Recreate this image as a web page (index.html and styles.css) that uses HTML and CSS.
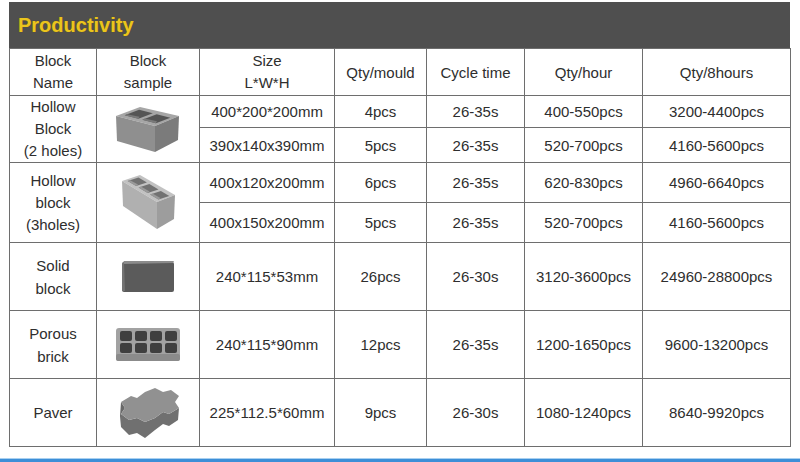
FILE: index.html
```html
<!DOCTYPE html>
<html>
<head>
<meta charset="utf-8">
<title>Productivity</title>
<link rel="stylesheet" href="styles.css">
</head>
<body>
<div class="page">
  <div class="sheet">
    <div class="title-bar"><h1 class="title">Productivity</h1></div>
    <table class="spec">
      <colgroup>
        <col class="w-name"><col class="w-sample"><col class="w-size"><col class="w-mould">
        <col class="w-cycle"><col class="w-hour"><col class="w-8h">
      </colgroup>
      <thead>
        <tr class="r-head">
          <th class="tight">Block<br>Name</th>
          <th class="tight">Block<br>sample</th>
          <th class="tight">Size<br>L*W*H</th>
          <th>Qty/mould</th>
          <th>Cycle time</th>
          <th>Qty/hour</th>
          <th>Qty/8hours</th>
        </tr>
      </thead>
      <tbody>
        <tr class="r1">
          <td rowspan="2" class="tight">Hollow<br>Block<br>(2 holes)</td>
          <td rowspan="2" class="sample">
            <svg class="pic" width="64" height="50" viewBox="0 0 64 50">
              <polygon points="0,12 24,3 63,12 39,22" fill="#a6a6a6"/>
              <polygon points="0,12 39,22 39,48 1,37" fill="#8f8f8f"/>
              <polygon points="39,22 63,12 62,36 39,48" fill="#7b7b7b"/>
              <polygon points="8.7,11.2 22.4,14.7 36.8,9.3 23.1,5.8" fill="#555"/>
              <polygon points="26.3,15.7 39.9,19.2 54.3,13.8 40.7,10.3" fill="#555"/>
              <polygon points="8.7,11.2 22.4,14.7 23.5,12.8 11,10.2" fill="#7a7a7a"/>
              <polygon points="26.3,15.7 39.9,19.2 41,17.3 28.5,14.6" fill="#7a7a7a"/>
            </svg>
          </td>
          <td>400*200*200mm</td><td>4pcs</td><td>26-35s</td><td>400-550pcs</td><td>3200-4400pcs</td>
        </tr>
        <tr class="r2">
          <td>390x140x390mm</td><td>5pcs</td><td>26-35s</td><td>520-700pcs</td><td>4160-5600pcs</td>
        </tr>
        <tr class="r3">
          <td rowspan="2" class="tight">Hollow<br>block<br>(3holes)</td>
          <td rowspan="2" class="sample">
            <svg class="pic" width="57" height="55" viewBox="0 0 57 55">
              <polygon points="2,6 20,0 55,20 37,27" fill="#c2c2c2"/>
              <polygon points="2,6 37,27 37,54 3,31" fill="#b0b0b0"/>
              <polygon points="37,27 55,20 54,44 37,54" fill="#9d9d9d"/>
              <polygon points="7.7,6.1 16.1,11.1 26.9,7.5 18.5,2.5" fill="#727272"/>
              <polygon points="18.6,12.6 27.7,18 38.5,14.4 29.4,9" fill="#727272"/>
              <polygon points="30.1,19.5 38.5,24.5 49.3,20.9 40.9,15.9" fill="#727272"/>
              <polygon points="7.7,6.1 16.1,11.1 18,9.6 10,5.2" fill="#9a9a9a"/>
              <polygon points="18.6,12.6 27.7,18 29.6,16.5 21,11.6" fill="#9a9a9a"/>
              <polygon points="30.1,19.5 38.5,24.5 40.4,23 32.4,18.5" fill="#9a9a9a"/>
            </svg>
          </td>
          <td>400x120x200mm</td><td>6pcs</td><td>26-35s</td><td>620-830pcs</td><td>4960-6640pcs</td>
        </tr>
        <tr class="r4">
          <td>400x150x200mm</td><td>5pcs</td><td>26-35s</td><td>520-700pcs</td><td>4160-5600pcs</td>
        </tr>
        <tr class="r5">
          <td>Solid<br>block</td>
          <td class="sample">
            <svg class="pic" width="54" height="33" viewBox="0 0 54 33">
              <rect x="1" y="2" width="52" height="30" rx="2" fill="#5b5b5b"/>
              <polygon points="1,4 3,1 53,1 52,3" fill="#8c8c8c"/>
              <polygon points="1,4 3,2 4,31 1,31" fill="#737373"/>
            </svg>
          </td>
          <td>240*115*53mm</td><td>26pcs</td><td>26-30s</td><td>3120-3600pcs</td><td>24960-28800pcs</td>
        </tr>
        <tr class="r6">
          <td>Porous<br>brick</td>
          <td class="sample">
            <svg class="pic" width="66" height="36" viewBox="0 0 66 36">
              <rect x="1" y="1" width="64" height="33" rx="3" fill="#a2a2a2"/>
              <rect x="1" y="27" width="64" height="7" rx="2" fill="#8b8b8b"/>
              <rect x="5" y="4" width="12" height="10" rx="2" fill="#3f3f3f"/>
              <rect x="20" y="4" width="12" height="10" rx="2" fill="#3f3f3f"/>
              <rect x="35" y="4" width="12" height="10" rx="2" fill="#3f3f3f"/>
              <rect x="50" y="4" width="12" height="10" rx="2" fill="#3f3f3f"/>
              <rect x="5" y="16" width="12" height="10" rx="2" fill="#3f3f3f"/>
              <rect x="20" y="16" width="12" height="10" rx="2" fill="#3f3f3f"/>
              <rect x="35" y="16" width="12" height="10" rx="2" fill="#3f3f3f"/>
              <rect x="50" y="16" width="12" height="10" rx="2" fill="#3f3f3f"/>
            </svg>
          </td>
          <td>240*115*90mm</td><td>12pcs</td><td>26-35s</td><td>1200-1650pcs</td><td>9600-13200pcs</td>
        </tr>
        <tr class="r7">
          <td>Paver</td>
          <td class="sample">
            <svg class="pic" width="63" height="53" viewBox="0 0 63 53">
              <polygon points="4,28 12,34 20,32 28,36 38,32 46,26 52,28 62,22 61,34 52,40 46,38 38,44 28,52 20,47 12,49 4,41" fill="#707070"/>
              <polygon points="4,16 8,22 4,28 4,41 3,30" fill="#686868"/>
              <polygon points="4,16 14,10 20,12 28,6 38,2 46,6 54,4 62,10 58,16 62,22 52,28 46,26 38,32 28,36 20,32 12,34 4,28 8,22" fill="#919191"/>
            </svg>
          </td>
          <td>225*112.5*60mm</td><td>9pcs</td><td>26-30s</td><td>1080-1240pcs</td><td>8640-9920pcs</td>
        </tr>
      </tbody>
    </table>
  </div>
  <div class="footer-line"></div>
</div>
</body>
</html>
```

FILE: styles.css
```css
html, body {
  margin: 0;
  padding: 0;
  background: #ffffff;
}

.page {
  width: 800px;
  height: 462px;
  overflow: hidden;
  display: flex;
  flex-direction: column;
  font-family: "Liberation Sans", Arial, sans-serif;
  color: #2e2e2e;
}

.sheet {
  margin: 2px 0 0 9px;
  width: 781px;
}

.title-bar {
  height: 46px;
  background: #4f4f4f;
  display: flex;
  align-items: center;
  padding-left: 9px;
  box-sizing: border-box;
}

.title {
  margin: 0;
  font-size: 20px;
  font-weight: bold;
  color: #ebc51d;
  line-height: 1;
  text-shadow: 0 0 1px #6b5a10;
}

.spec {
  border-collapse: collapse;
  table-layout: fixed;
  width: 781px;
}

.w-name { width: 87px; }
.w-sample { width: 103px; }
.w-size { width: 135px; }
.w-mould { width: 92px; }
.w-cycle { width: 98px; }
.w-hour { width: 118px; }
.w-8h { width: 148px; }

.spec th,
.spec td {
  border: 1px solid #6e6e6e;
  padding: 0;
  text-align: center;
  vertical-align: middle;
  font-size: 15px;
  line-height: 23px;
  font-weight: normal;
  color: #2e2e2e;
}

.spec .tight {
  line-height: 22px;
}

.r-head { height: 47px; }
.r1 { height: 32px; }
.r2 { height: 35px; }
.r3 { height: 40px; }
.r4 { height: 40px; }
.r5 { height: 68px; }
.r6 { height: 68px; }
.r7 { height: 68px; }

.pic {
  display: block;
  margin: 0 auto;
}

.footer-line {
  margin-top: auto;
  height: 3px;
  border-top: 1px solid #a9d0f0;
  background: #3d8fd8;
}
```
